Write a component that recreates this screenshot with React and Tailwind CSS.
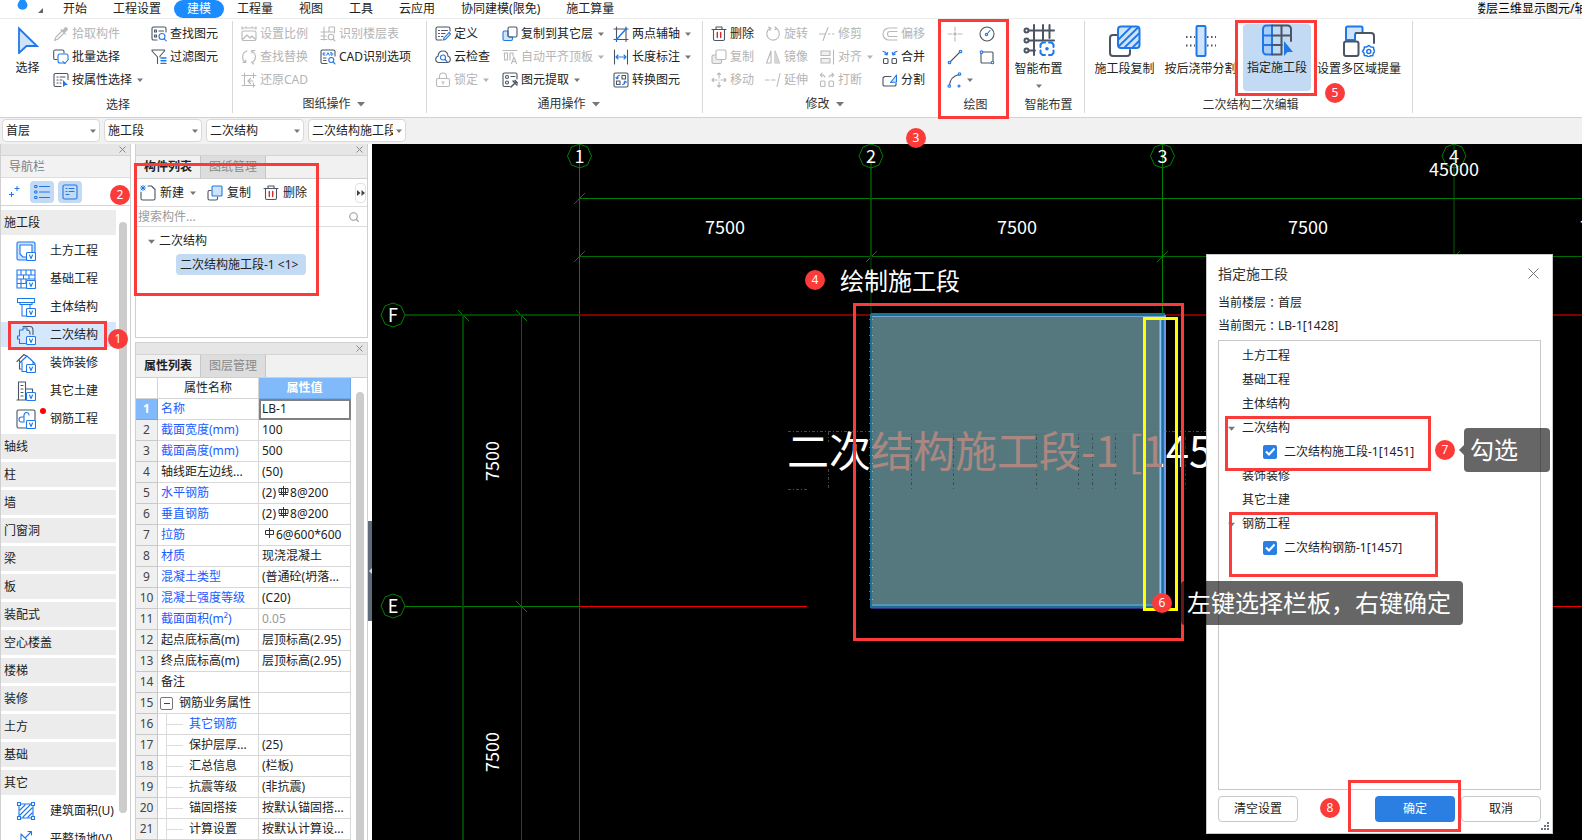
import React from "react";

const D = "#4b5563";
const B = "#1f78ea";
const G = "#b9b9b9";
const L = "#cfe3fb";

function Svg({ size = 16, box = 16, children, className = "" }) {
  return (
    <svg
      width={size}
      height={size}
      viewBox={`0 0 ${box} ${box}`}
      fill="none"
      strokeWidth="1.1"
      strokeLinecap="round"
      strokeLinejoin="round"
      className={`shrink-0 ${className}`}
      aria-hidden="true"
    >
      {children}
    </svg>
  );
}

function Caret({ color = "#777777", size = 7 }) {
  return (
    <svg width={size} height={size} viewBox="0 0 8 8" className="shrink-0" aria-hidden="true">
      <path d="M0 2h8L4 6.5z" fill={color} />
    </svg>
  );
}

const icons = {
  dropper: (
    <Svg>
      <path d="M9 5 3 11l-1.500 3.500L5 13l6-6" stroke={G} />
      <path d="M8 3.500 12.500 8M9.500 5l2.500-3c1-1 3 1 2 2l-3 2.500z" stroke={G} fill={G} />
    </Svg>
  ),
  batch: (
    <Svg>
      <path d="M4 10.500H2A1.500 1.500 0 0 1 .700 9V2.500A1.500 1.500 0 0 1 2 1h7.500A1.500 1.500 0 0 1 11 2.500V4" stroke={D} />
      <path d="M12 14H7a2 2 0 0 1-2-2V7a2 2 0 0 1 2-2h6a2 2 0 0 1 2 2v3" stroke={B} />
      <path d="m10 12.500 1.800 2 3.500-4" stroke={B} />
    </Svg>
  ),
  byAttr: (
    <Svg>
      <path d="M8 14.500H2.500a1.500 1.500 0 0 1-1.500-1.500V3a1.500 1.500 0 0 1 1.500-1.500h11A1.500 1.500 0 0 1 15 3v4.500M4 5h1M7 5h5M4 8h1M7 8h2M4 11h1M7 11h1" stroke={D} />
      <path d="m10 8 5 5h-2.500L10 15z" fill={B} />
    </Svg>
  ),
  find: (
    <Svg>
      <path d="M6 14H2.500A1.500 1.500 0 0 1 1 12.500v-10A1.500 1.500 0 0 1 2.500 1h11A1.500 1.500 0 0 1 15 2.500V6M3.500 4h2v2h-2zM3.500 9h2v2h-2zM8 5h4.500" stroke={D} />
      <circle cx="11" cy="10.500" r="3" stroke={B} />
      <path d="m13.200 12.800 2 2" stroke={B} />
    </Svg>
  ),
  filter: (
    <Svg>
      <path d="M6.500 14.500V8L1 2V1h12.500v1L9 7v1" stroke={D} />
      <path d="M10 9h5M10 11.700h5M10 14.400h5" stroke={B} strokeWidth="1.400" />
    </Svg>
  ),
  ratio: (
    <Svg>
      <path d="M1 2h14M1 .700v2.500M15 .700v2.500M5 .700V2M11 .700V2M2.500 5h11A1.500 1.500 0 0 1 15 6.500V13a1.500 1.500 0 0 1-1.500 1.500h-11A1.500 1.500 0 0 1 1 13V6.500A1.500 1.500 0 0 1 2.500 5zM2 13l4-4 3 3 2-2 3 3" stroke={G} />
    </Svg>
  ),
  replace: (
    <Svg>
      <path d="M6 2C.500 3.500.500 11 4.500 13.500M2 13.500h2.700V11M10 2c5.500 1.500 5.500 8 2 11M14 1.500h-3V4M10.500 13l2 2" stroke={G} />
    </Svg>
  ),
  restore: (
    <Svg>
      <path d="M3.500 1v12.500H14M1 3.500h14M12.500 1v5M1 13.500h2.500M12.500 11v4M7 9h5M9.500 6.500 7 9l2.500 2.500" stroke={G} />
    </Svg>
  ),
  floorTable: (
    <Svg>
      <path d="M4 1v5h5V1h5.500v6M1 6h3v8M1 13.500h6M1 10h5M9 6h5" stroke={G} />
      <circle cx="11" cy="11" r="2.800" stroke={G} />
      <path d="m13 13 2 2" stroke={G} />
    </Svg>
  ),
  cad: (
    <Svg>
      <path d="M7 14.500H2.500A1.500 1.500 0 0 1 1 13V2.500A1.500 1.500 0 0 1 2.500 1h11A1.500 1.500 0 0 1 15 2.500V7M3.500 9h2.500M3.500 11.500H6" stroke={D} />
      <path d="M5 4H3.200v2H5M6.700 6.200 8 3.700l1.300 2.500M11 3.800v2.400c2.600.300 2.600-2.700 0-2.400z" stroke={B} strokeWidth="1" />
      <circle cx="11.300" cy="11" r="2.500" stroke={B} />
      <path d="m13.200 13 1.800 1.800" stroke={B} />
    </Svg>
  ),
  define: (
    <Svg>
      <path d="M7 14H2.500A1.500 1.500 0 0 1 1 12.500v-10A1.500 1.500 0 0 1 2.500 1h11A1.500 1.500 0 0 1 15 2.500V5M3.500 4.500h1M6.500 4.500h6M3.500 7.500h1M6.500 7.500H10M3.500 10.500h1M6.500 10.500H8" stroke={D} />
      <path d="m9 12 5-5.500 1.500 1.500-5 5.500-2 .500z" stroke={B} fill={L} />
    </Svg>
  ),
  cloud: (
    <Svg>
      <path d="M4 13.500C1.500 13.500.700 11.800.700 10.300c0-1.500 1-2.700 2.300-3C3.200 4 5.300 2 8 2s4.800 2 5 5.300c1.400.300 2.300 1.500 2.300 3 0 1.500-.800 3.200-3.300 3.200z" stroke={D} />
      <circle cx="8" cy="8.500" r="2.500" stroke={B} />
      <path d="m10 10.500 2 2" stroke={B} />
    </Svg>
  ),
  lock: (
    <Svg>
      <path d="M3 6.500h10A1.500 1.500 0 0 1 14.500 8v5A1.500 1.500 0 0 1 13 14.500H3A1.500 1.500 0 0 1 1.500 13V8A1.500 1.500 0 0 1 3 6.500zM4.500 6.500V4.500a3.500 3.500 0 0 1 7 0v2M8 9.500v2.500M7 10h2" stroke={G} />
    </Svg>
  ),
  copyFloor: (
    <Svg>
      <path d="M6 5H2.500A1.500 1.500 0 0 0 1 6.500V13a1.500 1.500 0 0 0 1.500 1.500H9a1.500 1.500 0 0 0 1.500-1.500v-2H7.500A1.500 1.500 0 0 1 6 9.500z" stroke={B} fill={L} />
      <rect x="6" y="1" width="9" height="10" rx="1.500" stroke={D} />
    </Svg>
  ),
  flush: (
    <Svg>
      <path d="M1 1.500h14M2.500 4h3v7h-3zM8 11V4h3v3M9.500 14.500 12 8l2.500 6.500M10.500 12.500h3" stroke={G} />
    </Svg>
  ),
  extract: (
    <Svg>
      <path d="M8 14.500H2.500A1.500 1.500 0 0 1 1 13V2.500A1.500 1.500 0 0 1 2.500 1h11A1.500 1.500 0 0 1 15 2.500V7M9 4.500h4" stroke={D} />
      <circle cx="5" cy="5" r="1.500" stroke={D} />
      <circle cx="5" cy="10.500" r="1.500" stroke={D} />
      <path d="m9 15 5-5M11 9l4 4M13 8.500l2.500 2.500" stroke={D} strokeWidth="1.500" />
    </Svg>
  ),
  axis: (
    <Svg>
      <path d="M1 3h14M1 13.500h14M3.500 1v14.500M13 1v14.500" stroke={D} />
      <path d="M3.500 13.500 13 3" stroke={B} strokeWidth="1.500" />
      <circle cx="3.500" cy="13.500" r="1" fill={B} />
      <circle cx="13" cy="3" r="1" fill={B} />
    </Svg>
  ),
  dim: (
    <Svg>
      <path d="M1.500 1v14M14.500 1v14" stroke={D} />
      <path d="M3 8h10M5 6 3 8l2 2M11 6l2 2-2 2" stroke={B} />
    </Svg>
  ),
  convert: (
    <Svg>
      <rect x="1" y="1" width="14" height="14" rx="1.500" stroke={D} />
      <path d="M9 3.500h3.500V7H9zM3.500 9H7v3.500H3.500z" stroke={D} />
      <path d="M6.500 3.500c-2 0-2.500 1-2.500 3M3 5.500l1 1.300 1.300-1M9.500 12.500c2 0 2.500-1 2.500-3M11 10.500l1-1.300 1.300 1" stroke={B} />
    </Svg>
  ),
  trash: (
    <Svg>
      <path d="M1 3.500h14M5 3.500V1h6v2.500M2.500 3.500V13A1.500 1.500 0 0 0 4 14.500h8a1.500 1.500 0 0 0 1.500-1.500V3.500" stroke={D} />
      <path d="M6.300 6.500v5M9.700 6.500v5" stroke="#d22b2b" strokeWidth="1.400" />
    </Svg>
  ),
  rotate: (
    <Svg>
      <path d="M5 2.300A6.300 6.300 0 1 0 10.500 2M3.500 1 6 2.200 4.800 4.500M10 .800 12 2.500l-2 1.300" stroke={G} />
    </Svg>
  ),
  trim: (
    <Svg>
      <path d="M.500 8H6M4 14.500 9 1.500M9.500 8h1.500M13.500 8h1.500" stroke={G} />
    </Svg>
  ),
  offset: (
    <Svg>
      <path d="M15 2H7a6 6 0 0 0 0 12h8M15 5.500H8a2.500 2.500 0 0 0 0 5h7" stroke={G} />
    </Svg>
  ),
  copyGray: (
    <Svg>
      <path d="M5 6H2.500A1.500 1.500 0 0 0 1 7.500V13a1.500 1.500 0 0 0 1.500 1.500H9a1.500 1.500 0 0 0 1.500-1.500v-2.500" stroke={G} fill="#ececec" />
      <rect x="5" y="1" width="10" height="9.500" rx="1.500" stroke={G} fill="#ffffff" />
    </Svg>
  ),
  mirror: (
    <Svg>
      <path d="M6 2v12H1.500zM10 2v12h4.500z" stroke={G} />
      <path d="M10 2v12h4.500z" fill="#d5d5d5" />
    </Svg>
  ),
  align: (
    <Svg>
      <path d="M14.500 1v14M2 2h9v4.500H2zM2 9.500h9V14H2z" stroke={G} fill="#f0f0f0" />
    </Svg>
  ),
  merge: (
    <Svg>
      <rect x="1.500" y="9.500" width="4.500" height="5" rx="1" stroke={D} />
      <rect x="10" y="9.500" width="4.500" height="5" rx="1" stroke={D} />
      <path d="M1 2.500c2 0 3 .500 4 3M5.700 3.500 5 6 2.700 5M15 2.500c-2 0-3 .500-4 3M10.300 3.500 11 6l2.300-1" stroke={B} />
    </Svg>
  ),
  move: (
    <Svg>
      <path d="M8 1v5M8 10v5M1 8h5M10 8h5M6.500 2.500 8 1l1.500 1.500M6.500 13.500 8 15l1.500-1.500M2.500 6.500 1 8l1.500 1.500M13.500 6.500 15 8l-1.500 1.500M8 8h.010" stroke={G} />
    </Svg>
  ),
  extend: (
    <Svg>
      <path d="M.500 8h3.500M6.500 8H10M12 14.500l3-13" stroke={G} />
    </Svg>
  ),
  breakIt: (
    <Svg>
      <rect x="1.500" y="9" width="4.500" height="5.500" rx="1" stroke={G} />
      <rect x="10" y="9" width="4.500" height="5.500" rx="1" stroke={G} />
      <path d="M6 5C5 3 4 2.500 1.500 3M3 1 1.200 3 3 5M10 5c1-2 2-2.500 4.500-2M13 1l1.800 2L13 5" stroke={G} />
    </Svg>
  ),
  split: (
    <Svg>
      <path d="M9 4.500H2.500L1 6v7l1 1h11l1-1v-2" stroke={D} />
      <path d="m8.500 10.500 6-7.500v7z" stroke={B} fill={L} />
    </Svg>
  ),
  point: (
    <Svg>
      <path d="M8 1v4M8 11v4M1 8h4M11 8h4" stroke={G} />
      <circle cx="8" cy="8" r="1.700" fill={G} />
    </Svg>
  ),
  circle: (
    <Svg>
      <circle cx="8" cy="8" r="7" stroke={D} />
      <path d="m8 8 3-3.500" stroke={B} />
      <circle cx="7.500" cy="8.500" r="1.200" stroke={B} />
    </Svg>
  ),
  line: (
    <Svg>
      <path d="M3 13 13 3" stroke={D} />
      <circle cx="2.500" cy="13.500" r="1.300" stroke={B} />
      <circle cx="13.500" cy="2.500" r="1.300" stroke={B} />
    </Svg>
  ),
  rect: (
    <Svg>
      <rect x="2" y="3" width="12" height="11" rx="1" stroke={D} />
      <circle cx="2.500" cy="3.200" r="1.300" stroke={B} fill="#ffffff" />
      <circle cx="13.500" cy="13.500" r="1.300" stroke={B} fill="#ffffff" />
    </Svg>
  ),
  arc: (
    <Svg>
      <path d="M2.500 13C3 8 6 4 12 2.500" stroke={D} />
      <circle cx="2.300" cy="14" r="1.300" stroke={B} />
      <circle cx="12.500" cy="2" r="1.300" stroke={B} />
      <circle cx="12" cy="14" r="1" stroke={B} />
    </Svg>
  ),
  cursor: (
    <Svg size={28} box={28}>
      <path d="M5 2.500 23 20H12.500L5 27z" fill={L} stroke={B} strokeWidth="1.800" strokeLinejoin="miter" />
    </Svg>
  ),
  smart: (
    <Svg size={32} box={32}>
      <g stroke={D} strokeWidth="2">
        <path d="M6 6.500h25M6 16.500h25M6 26.500h6M11 1v30M20 1v15M26.500 1v13" />
        <circle cx="3.500" cy="6.500" r="2" />
        <circle cx="3.500" cy="16.500" r="2" />
        <circle cx="3.500" cy="26.500" r="2" />
      </g>
      <rect x="15" y="18" width="17" height="14" fill="#ffffff" />
      <path d="M17.500 23v-2.500l2-2H22M26 18.500h2.500l2 2V23M30.500 26.500V29l-2 2H26M22 31h-2.500l-2-2v-2.500" stroke={B} strokeWidth="2" />
      <circle cx="24" cy="24.700" r="1.800" fill={B} />
    </Svg>
  ),
  segCopy: (
    <Svg size={32} box={32}>
      <path d="M8 10H4a3 3 0 0 0-3 3v15a3 3 0 0 0 3 3h14a3 3 0 0 0 3-3v-3" stroke={D} strokeWidth="2" />
      <rect x="9" y="1.500" width="21.500" height="21.500" rx="3" fill={L} stroke={B} strokeWidth="2" />
      <path d="m10 14 12-12M10 21 29 2.500M16 22 30 8.500M24 22l6-6" stroke={B} strokeWidth="1.800" />
    </Svg>
  ),
  postCast: (
    <Svg size={32} box={32}>
      <rect x="11.500" y="1" width="9" height="30" rx="1" fill={L} stroke={B} strokeWidth="2" />
      <path d="M1 12h9M1 20.500h9M22 12h9M22 20.500h9" stroke={D} strokeWidth="2" strokeDasharray="1.500 2.500" strokeLinecap="butt" />
    </Svg>
  ),
  assign: (
    <Svg size={32} box={32}>
      <path d="M2 11.500V5a3.500 3.500 0 0 1 3.500-3.500H11v29H5.500A3.500 3.500 0 0 1 2 27z" fill="#a9cdf8" stroke={B} strokeWidth="2" />
      <path d="M2 11.500h9M2 21h9" stroke={B} strokeWidth="2" />
      <path d="M11 1.500h15.500A3.500 3.500 0 0 1 30 5v12M20.500 1.500v29M11 30.500h9.500M11 11.500h19M11 21h10" stroke={D} strokeWidth="2" />
      <path d="m23 17 9 11h-5.500L23 32z" fill={B} />
    </Svg>
  ),
  region: (
    <Svg size={32} box={32}>
      <path d="M3 15V3a1.500 1.500 0 0 1 1.500-1.500H18A1.500 1.500 0 0 1 19.500 3v5H14a2 2 0 0 0-2 2v5z" fill={L} stroke={B} strokeWidth="2" />
      <path d="M13 8h15a3 3 0 0 1 3 3v7" stroke={D} strokeWidth="2" />
      <rect x="1" y="16.500" width="14.500" height="14.500" rx="2" fill="#ffffff" stroke={D} strokeWidth="2" />
      <path d="m26 20.500 2 1.500 2.500.200.300 2.500 1 1.800-1.500 1.800-.500 2.400-2.300.100L25.500 32l-1.800-1.300-2.400-.200-.300-2.400-1.500-1.800 1.500-2 .400-2.200 2.300-.200z" stroke={B} strokeWidth="1.500" />
      <circle cx="25.800" cy="26.500" r="2" stroke={B} strokeWidth="1.500" />
    </Svg>
  ),
  newItem: (
    <Svg>
      <path d="M8 1h3.500L15 4.500v9a1.500 1.500 0 0 1-1.500 1.500h-11A1.500 1.500 0 0 1 1 13.500V7" stroke={D} />
      <path d="m1 1 4 4M5 1 1 5M3 .500v5M.500 3h5" stroke={B} strokeWidth="1" />
    </Svg>
  ),
  copyBlue: (
    <Svg>
      <path d="M4 5.500H2.500A1.500 1.500 0 0 0 1 7v6.500A1.500 1.500 0 0 0 2.500 15H9a1.500 1.500 0 0 0 1.500-1.500V12" stroke={D} />
      <rect x="5" y="1" width="10" height="10" rx="1" stroke={B} fill={L} />
    </Svg>
  ),
};

const V = (
  <>
    <rect x="10.500" y="11.500" width="9" height="8" rx="1" fill="#ffffff" stroke={B} />
    <path d="m13.500 14 1.500 3.500 1.500-3.500" stroke={B} strokeWidth="1.100" />
  </>
);

const navIcons = {
  earth: (
    <Svg size={20} box={20}>
      <rect x="1" y="1" width="18" height="18" rx="1.500" fill={L} stroke={B} />
      <path d="M4 4h12v12H7l-3-3z" fill="#ffffff" stroke={B} />
      {V}
    </Svg>
  ),
  base: (
    <Svg size={20} box={20}>
      <path d="M1 1h18v18H1zM1 6h18M1 10h18M1 14.500h18M5 1v5M10 1v5M15 1v5M7.500 6v4M13 6v4M5 10v4.500M10 10v4.500M5 14.500V19" stroke={B} />
      {V}
    </Svg>
  ),
  main: (
    <Svg size={20} box={20}>
      <path d="M1.500 1.500h17v4h-17zM4 5.500v2h12v-2M6 7.500V19h5M14 7.500v4" stroke={B} />
      {V}
    </Svg>
  ),
  second: (
    <Svg size={20} box={20}>
      <path d="M9.500 18.500H3.500V14H1.500v-3h2V5h3.500V3h4v2M3.500 9V7" stroke={B} />
      <path d="M7 1.500h7c2.500 0 3 2 3 4v4M11 5c2.500 0 3 1 3 4" stroke={D} />
      {V}
    </Svg>
  ),
  decor: (
    <Svg size={20} box={20}>
      <path d="M1 8.500 8 1.500l3 2M3.500 7.500V16H5" stroke={D} />
      <path d="m3.500 10 7.500-7 8 7.500M6 9v9.500h4M17 9v2" stroke={B} />
      {V}
    </Svg>
  ),
  other: (
    <Svg size={20} box={20}>
      <path d="M2.500 19V1h7v18M1 19h9M9.500 8h7v3M5 4.500h2M5 8h2M5 11.500h2M5 15h2" stroke={D} />
      {V}
    </Svg>
  ),
  rebar: (
    <Svg size={20} box={20}>
      <path d="M10 19H2.500A1.500 1.500 0 0 1 1 17.500v-15A1.500 1.500 0 0 1 2.500 1h15A1.500 1.500 0 0 1 19 2.500V11" stroke={D} />
      <path d="M8 8H5.500a2.500 2.500 0 0 0 0 5H8V6.500c0-4 5-4 5-.500" stroke={B} />
      {V}
    </Svg>
  ),
  area: (
    <Svg size={20} box={20}>
      <path d="M3 3h14v14H3zM4 9l5-5M4 14 14 4M7 16 16 7M12 16l4-4" stroke={B} />
      <g fill="#ffffff" stroke={B}>
        <path d="M1.500 1.500h3v3h-3zM15.500 1.500h3v3h-3zM1.500 15.500h3v3h-3zM15.500 15.500h3v3h-3z" />
      </g>
    </Svg>
  ),
  ground: (
    <Svg size={20} box={20}>
      <path d="M9 9 15 3M12 2.500 15.500 2.500V6M5 5l8 8M5 5v7h7M2 16h16" stroke={B} />
    </Svg>
  ),
};

function Badge({ n, className }) {
  return (
    <span
      className={`absolute z-20 flex h-5 w-5 items-center justify-center rounded-full bg-[#fb3a3a] text-xs leading-none text-white ${className}`}
    >
      {n}
    </span>
  );
}

function Frame({ className }) {
  return <span aria-hidden="true" className={`pointer-events-none absolute z-10 border-3 border-[#fb3a3a] ${className}`} />;
}

function Tool({ icon, label, off, arrow, name }) {
  return (
    <button
      type="button"
      disabled={off}
      aria-label={name}
      className={`flex h-[23px] items-center gap-[3px] whitespace-nowrap text-xs ${off ? "text-[#b4b4b4]" : "text-[#222222]"}`}
    >
      {icons[icon]}
      {label && <span>{label}</span>}
      {arrow && (
        <span className="ml-0.5 flex">
          <Caret color={off ? "#b4b4b4" : "#777777"} size={6} />
        </span>
      )}
    </button>
  );
}

function Col({ className = "", children }) {
  return <div className={`flex flex-col items-start ${className}`}>{children}</div>;
}

function Group({ label, arrow, className = "", children }) {
  return (
    <section className={`relative flex shrink-0 flex-col pt-[3px] ${className}`} aria-label={label}>
      <div className="flex h-[69px]">{children}</div>
      <div className={`flex h-[26px] items-center justify-center gap-1.5 text-xs text-[#333333] ${arrow ? "" : "pt-0.5 pl-1"}`}>
        <span>{label}</span>
        {arrow && <Caret size={8} />}
      </div>
    </section>
  );
}

function Divider() {
  return <div className="mt-0.5 mb-1 w-px shrink-0 bg-[#d8d8d8]" />;
}

function BigTool({ icon, label, active, className = "" }) {
  return (
    <button
      type="button"
      className={`flex h-[67px] shrink-0 flex-col items-center gap-[3px] overflow-hidden rounded-sm text-xs whitespace-nowrap text-[#222222] ${
        active ? "mt-0.5 bg-[#c2daf3]" : "pt-[3px]"
      } ${className}`}
    >
      {icons[icon]}
      <span className="leading-[18px]">{label}</span>
    </button>
  );
}

const tabs = ["开始", "工程设置", "建模", "工程量", "视图", "工具", "云应用", "协同建模(限免)", "施工算量"];

function TopTabs() {
  return (
    <nav className="flex h-[19px] items-stretch border-b border-[#ebebeb] bg-white" aria-label="菜单">
      <div className="flex w-[50px] shrink-0 justify-between pr-[7px] pl-[17px]">
        <svg width="11" height="10" viewBox="0 0 11 10" aria-hidden="true">
          <path d="M3 0h5c2 3 3 4.500 2 7-1.500 3.500-7.500 3.500-9 0C0 4.500 1 3 3 0z" fill="#1f8fff" />
        </svg>
        <svg width="5" height="13" viewBox="0 0 5 13" aria-hidden="true">
          <path d="M5 8v5H0z" fill="#666666" />
        </svg>
      </div>
      {tabs.map((t) => (
        <a
          key={t}
          href="#"
          className={`flex items-center px-[13px] text-xs whitespace-nowrap ${
            t === "建模" ? "rounded-full bg-[#1a8cff] text-white" : "text-[#222222]"
          }`}
        >
          {t}
        </a>
      ))}
      <div className="ml-auto flex w-[104px] overflow-hidden rounded-sm bg-[#f6f6f6]">
        <span className="-ml-1 text-xs leading-[18px] whitespace-nowrap text-black">楼层三维显示图元/轴网</span>
      </div>
    </nav>
  );
}

function Ribbon() {
  return (
    <header className="flex h-[99px] border-b border-[#d2d2d2] bg-white">
      <Group label="选择" className="w-[232px]">
        <button type="button" className="flex w-[53px] flex-col items-center gap-[3px] pt-1 pl-0.5 text-xs text-[#222222]">
          {icons.cursor}
          <span className="leading-[22px]">选择</span>
        </button>
        <Col className="w-[98px]">
          <Tool icon="dropper" label="拾取构件" off />
          <Tool icon="batch" label="批量选择" />
          <Tool icon="byAttr" label="按属性选择" arrow />
        </Col>
        <Col>
          <Tool icon="find" label="查找图元" />
          <Tool icon="filter" label="过滤图元" />
        </Col>
      </Group>
      <Divider />
      <Group label="图纸操作" arrow className="w-[193px] pl-2">
        <Col className="w-[79px]">
          <Tool icon="ratio" label="设置比例" off />
          <Tool icon="replace" label="查找替换" off />
          <Tool icon="restore" label="还原CAD" off />
        </Col>
        <Col>
          <Tool icon="floorTable" label="识别楼层表" off />
          <Tool icon="cad" label="CAD识别选项" />
        </Col>
      </Group>
      <Divider />
      <Group label="通用操作" arrow className="w-[275px] pl-2">
        <Col className="w-[67px]">
          <Tool icon="define" label="定义" />
          <Tool icon="cloud" label="云检查" />
          <Tool icon="lock" label="锁定" off arrow />
        </Col>
        <Col className="w-[111px]">
          <Tool icon="copyFloor" label="复制到其它层" arrow />
          <Tool icon="flush" label="自动平齐顶板" off arrow />
          <Tool icon="extract" label="图元提取" arrow />
        </Col>
        <Col>
          <Tool icon="axis" label="两点辅轴" arrow />
          <Tool icon="dim" label="长度标注" arrow />
          <Tool icon="convert" label="转换图元" />
        </Col>
      </Group>
      <Divider />
      <Group label="修改" arrow className="w-[235px] pl-2">
        <Col className="w-[54px]">
          <Tool icon="trash" label="删除" />
          <Tool icon="copyGray" label="复制" off />
          <Tool icon="move" label="移动" off />
        </Col>
        <Col className="w-[54px]">
          <Tool icon="rotate" label="旋转" off />
          <Tool icon="mirror" label="镜像" off />
          <Tool icon="extend" label="延伸" off />
        </Col>
        <Col className="w-[63px]">
          <Tool icon="trim" label="修剪" off />
          <Tool icon="align" label="对齐" off arrow />
          <Tool icon="breakIt" label="打断" off />
        </Col>
        <Col>
          <Tool icon="offset" label="偏移" off />
          <Tool icon="merge" label="合并" />
          <Tool icon="split" label="分割" />
        </Col>
      </Group>
      <Group label="绘图" className="w-[71px]">
        <Frame className="inset-x-0 top-0 -bottom-0.5" />
        <Col className="w-8 pl-[9px]">
          <Tool icon="point" name="点" off />
          <Tool icon="line" name="直线" />
          <button type="button" className="flex h-[23px] items-center gap-1" aria-label="弧">
            {icons.arc}
            <Caret size={6} />
          </button>
        </Col>
        <Col className="pl-[9px]">
          <Tool icon="circle" name="圆" />
          <Tool icon="rect" name="矩形" />
        </Col>
      </Group>
      <Group label="智能布置" className="w-[75px]">
        <button type="button" className="flex w-full flex-col items-center pt-0.5 pr-4 text-xs text-[#222222]">
          {icons.smart}
          <span className="mt-1 mb-[5px] leading-[18px]">智能布置</span>
          <Caret size={6} />
        </button>
      </Group>
      <Divider />
      <Group label="二次结构二次编辑" className="w-[327px]">
        <BigTool icon="segCopy" label="施工段复制" className="ml-1 w-[71px]" />
        <BigTool icon="postCast" label="按后浇带分割" className="w-[81px]" />
        <BigTool icon="assign" label="指定施工段" active className="ml-[2px] w-[68px]" />
        <BigTool icon="region" label="设置多区域提量" className="ml-[5px] w-[86px]" />
        <Frame className="top-px left-[150px] h-[76px] w-[82px]" />
        <Badge n="5" className="top-16 left-[240px]" />
      </Group>
      <Divider />
    </header>
  );
}

function Selectors() {
  return (
    <div className="relative flex h-[26px] items-start gap-1 bg-[#f1f1f1] pt-px pl-0.5">
      {[
        ["楼层", "首层"],
        ["专业", "施工段"],
        ["类型", "二次结构"],
        ["构件", "二次结构施工段"],
      ].map(([name, value]) => (
        <label key={name} className="relative flex h-[23px] w-[98px]">
          <select
            aria-label={name}
            className="h-full w-full appearance-none overflow-hidden rounded border border-[#d9d9d9] bg-white pr-3 pl-[3px] text-xs text-[#222222]"
          >
            <option>{value}</option>
          </select>
          <span className="pointer-events-none absolute inset-y-0 right-1 flex items-center">
            <Caret size={6} />
          </span>
        </label>
      ))}
      <Badge n="3" className="top-[10px] left-[906px]" />
    </div>
  );
}

function Strip() {
  return (
    <div className="flex h-3 shrink-0 items-center justify-end border-b border-[#d4d4d4] bg-[#e6e6e6] pr-1">
      <button type="button" aria-label="关闭" className="flex">
        <svg width="7" height="7" viewBox="0 0 7 7" stroke="#8a8a8a" aria-hidden="true">
          <path d="m.500.500 6 6M6.500.500l-6 6" />
        </svg>
      </button>
    </div>
  );
}

const navTop = [
  ["earth", "土方工程"],
  ["base", "基础工程"],
  ["main", "主体结构"],
  ["second", "二次结构"],
  ["decor", "装饰装修"],
  ["other", "其它土建"],
  ["rebar", "钢筋工程"],
];
const navHeads = ["轴线", "柱", "墙", "门窗洞", "梁", "板", "装配式", "空心楼盖", "楼梯", "装修", "土方", "基础", "其它"];

function NavHead({ children }) {
  return (
    <button type="button" className="mb-[3px] block h-[25px] w-full bg-[#ececec] pl-[3px] text-left text-xs leading-[25px] text-[#222222]">
      {children}
    </button>
  );
}

function NavItem({ icon, label }) {
  const active = label === "二次结构";
  return (
    <div className="relative mb-[3px]">
      <a
        href="#"
        className={`flex h-[25px] items-center gap-3.5 pl-[15px] text-xs whitespace-nowrap text-[#222222] ${active ? "bg-[#d4e7fd]" : ""}`}
      >
        {navIcons[icon]}
        {label}
      </a>
      {icon === "rebar" && <span className="absolute top-0.5 left-[39px] h-1.5 w-1.5 rounded-full bg-[#ff0000]" />}
      {active && (
        <>
          <Frame className="-top-px left-[7px] h-[29px] w-[99px]" />
          <Badge n="1" className="top-[7px] left-[107px]" />
        </>
      )}
    </div>
  );
}

function NavPanel() {
  return (
    <aside className="relative flex w-[131px] shrink-0 flex-col border-x border-[#d0d0d0] bg-white">
      <Strip />
      <h2 className="h-[22px] shrink-0 border-b border-[#dedede] bg-[#f2f2f2] pl-2 text-xs leading-[21px] text-[#808080]">导航栏</h2>
      <div className="flex h-7 shrink-0 items-center gap-1 border-b border-[#d4d4d4] pl-2">
        <button type="button" aria-label="展开" className="mr-1.5 flex w-[11px]">
          <svg width="11" height="12" viewBox="0 0 11 12" stroke={B} aria-hidden="true">
            <path d="M8 0v5M5.500 2.500h5M2.500 6v5M0 8.500h5" />
          </svg>
        </button>
        <button type="button" aria-label="列表" className="flex h-[22px] w-6 items-center justify-center rounded-sm bg-[#c2daf3]">
          <Svg>
            <path d="M5.500 2.500h10M5.500 8h10M5.500 13.500h10" stroke={B} />
            <path d="M1 1.500h2v2H1zM1 7h2v2H1zM1 12.500h2v2H1z" stroke={B} strokeWidth="1" />
          </Svg>
        </button>
        <button type="button" aria-label="详情" className="flex h-[22px] w-6 items-center justify-center rounded-sm bg-[#c2daf3]">
          <Svg>
            <rect x="1" y="1" width="14" height="14" rx="1.500" stroke={B} />
            <path d="M4 4.500h1M7 4.500h5M4 7.500h1M7 7.500h5M4 10.500h3" stroke={B} />
          </Svg>
        </button>
      </div>
      <Badge n="2" className="top-[41px] left-[109px]" />
      <div className="flex min-h-0 flex-1 gap-[3px] overflow-hidden">
        <div className="w-[115px] shrink-0 pt-1">
          <NavHead>施工段</NavHead>
          {navTop.map(([icon, label]) => (
            <NavItem key={label} icon={icon} label={label} />
          ))}
          {navHeads.map((h) => (
            <NavHead key={h}>{h}</NavHead>
          ))}
          <NavItem icon="area" label="建筑面积(U)" />
          <NavItem icon="ground" label="平整场地(V)" />
        </div>
        <div className="mt-4 mb-[27px] w-2 rounded-full bg-[#cccccc]" />
      </div>
    </aside>
  );
}

function PanelTabs({ a, b }) {
  return (
    <div role="tablist" className="flex h-[23px] shrink-0 border-b border-[#d0d0d0] bg-[#f1f1f1] text-xs">
      <button type="button" role="tab" aria-selected="true" className="w-[65px] border-r border-[#c4c8cc] font-bold text-[#222222]">
        {a}
      </button>
      <button type="button" role="tab" aria-selected="false" className="w-[65px] border-r border-[#c4c8cc] bg-[#dddddd] text-[#8a8a8a]">
        {b}
      </button>
    </div>
  );
}

function ComponentPanel() {
  return (
    <section className="relative flex h-[194px] shrink-0 flex-col border-x border-b border-[#d0d0d0] bg-white" aria-label="构件列表">
      <Strip />
      <PanelTabs a="构件列表" b="图纸管理" />
      <div className="flex h-7 shrink-0 items-center border-b border-[#dddddd] pt-px pl-1 text-xs text-[#222222]">
        <button type="button" className="flex w-[67px] items-center gap-1">
          {icons.newItem}新建
          <span className="ml-0.5 flex">
            <Caret size={6} />
          </span>
        </button>
        <button type="button" className="flex w-14 items-center gap-1">
          {icons.copyBlue}复制
        </button>
        <button type="button" className="flex items-center gap-1">
          {icons.trash}删除
        </button>
        <button type="button" aria-label="更多" className="mr-px ml-auto flex h-5 w-[11px] items-center justify-center rounded-sm border border-[#e2e2e2]">
          <svg width="8" height="6" viewBox="0 0 8 6" className="shrink-0" aria-hidden="true">
            <path d="m0 0 3.500 3L0 6zM4.500 0 8 3 4.500 6z" fill="#444444" />
          </svg>
        </button>
      </div>
      <label className="flex h-5 shrink-0 items-center border-b border-[#dddddd] pr-2 pl-0.5">
        <input
          type="text"
          aria-label="搜索构件"
          placeholder="搜索构件..."
          className="h-[18px] min-w-0 flex-1 bg-transparent text-xs outline-none placeholder:text-[#9a9a9a]"
        />
        <Svg size={10} box={10}>
          <circle cx="4.500" cy="4.500" r="3.800" stroke="#999999" strokeWidth="1.100" />
          <path d="m7.300 7.300 2 2" stroke="#999999" strokeWidth="1.200" />
        </Svg>
      </label>
      <div className="flex flex-col items-start pt-0.5 pl-3 text-xs text-[#222222]">
        <button type="button" className="flex h-6 items-center gap-1">
          <Caret />
          二次结构
        </button>
        <button type="button" className="mt-px ml-7 h-[21px] rounded-sm bg-[#c2daf3] pr-2 pl-1 leading-[21px] whitespace-nowrap">
          二次结构施工段-1 &lt;1&gt;
        </button>
      </div>
      <Frame className="top-[19px] -left-0.5 h-[133px] w-[185px]" />
    </section>
  );
}

function RebarMark({ grade }) {
  return (
    <svg width="11" height="12" viewBox="0 0 11 12" stroke="#333333" fill="none" className="mr-px mb-0.5 ml-0.5 shrink-0" role="img" aria-label="钢筋">
      {grade === 3 ? <path d="M1 2.500h9v4H1zM5.500 0v11M3.500 2.500v6M7.500 2.500v6M1 8.500h9" /> : <path d="M1.500 2.500h8v4h-8zM5.500 0v10" />}
    </svg>
  );
}

function BarValue({ before, grade, after }) {
  return (
    <span className="flex h-5 items-center">
      {before}
      <RebarMark grade={grade} />
      {after}
    </span>
  );
}

const props = [
  ["名称", "LB-1", 1],
  ["截面宽度(mm)", "100", 1],
  ["截面高度(mm)", "500", 1],
  ["轴线距左边线...", "(50)", 0],
  ["水平钢筋", <BarValue before="(2)" grade={3} after="8@200" />, 1],
  ["垂直钢筋", <BarValue before="(2)" grade={3} after="8@200" />, 1],
  ["拉筋", <BarValue before="" grade={1} after="6@600*600" />, 1],
  ["材质", "现浇混凝土", 1],
  ["混凝土类型", "(普通砼(坍落...", 1],
  ["混凝土强度等级", "(C20)", 1],
  ["截面面积(m²)", "0.05", 1],
  ["起点底标高(m)", "层顶标高(2.95)", 0],
  ["终点底标高(m)", "层顶标高(2.95)", 0],
  ["备注", "", 0],
  ["钢筋业务属性", "", 0],
  ["其它钢筋", "", 1],
  ["保护层厚...", "(25)", 0],
  ["汇总信息", "(栏板)", 0],
  ["抗震等级", "(非抗震)", 0],
  ["锚固搭接", "按默认锚固搭...", 0],
  ["计算设置", "按默认计算设...", 0],
];

function NameCell({ i, label }) {
  if (i === 14)
    return (
      <span className="flex items-center gap-1.5">
        <button
          type="button"
          aria-label="折叠"
          className="-ml-px flex h-[13px] w-[13px] items-center justify-center rounded-xs border border-[#777777] bg-white"
        >
          <span className="h-px w-1.5 bg-[#444444]" />
        </button>
        {label}
      </span>
    );
  if (i > 14)
    return (
      <span className="ml-[5px] flex h-5 items-center gap-1.5 border-l border-[#dcdcdc]">
        <span className="h-px w-4 bg-[#dcdcdc]" />
        {label}
      </span>
    );
  return label;
}

function PropertyPanel() {
  return (
    <section className="flex min-h-0 flex-1 flex-col overflow-hidden border-x border-t border-[#d0d0d0] bg-white" aria-label="属性列表">
      <Strip />
      <PanelTabs a="属性列表" b="图层管理" />
      <div className="flex min-h-0 flex-1 gap-[5px] overflow-hidden">
        <table className="w-[215px] shrink-0 table-fixed border-separate border-spacing-0 self-start text-xs text-[#222222]">
          <colgroup>
            <col className="w-[22px]" />
            <col className="w-[101px]" />
            <col className="w-[92px]" />
          </colgroup>
          <thead>
            <tr className="h-[21px]">
              <th className="border-r border-b border-[#d4d4d4] p-0" />
              <th className="border-r border-b border-[#d4d4d4] p-0 leading-5 font-normal">属性名称</th>
              <th className="border-r border-b border-[#6fa8e8] bg-[#80bafb] p-0 leading-5 font-bold text-white">属性值</th>
            </tr>
          </thead>
          <tbody>
            {props.map(([name, value, blue], i) => (
              <tr key={i} className="h-[21px]">
                <th
                  className={`border-r border-b p-0 text-center leading-5 ${
                    i === 0 ? "border-[#6fa8e8] bg-[#80bafb] font-bold text-white" : "border-[#c9c9c9] bg-[#f0f0f0] font-normal text-[#444444]"
                  }`}
                >
                  {i + 1}
                </th>
                <td
                  className={`overflow-hidden border-r border-b border-[#d8d8d8] p-0 pl-[3px] leading-5 whitespace-nowrap ${blue ? "text-[#1a5cff]" : ""}`}
                >
                  <NameCell i={i} label={name} />
                </td>
                <td
                  className={`overflow-hidden border-r border-b border-[#d8d8d8] p-0 pl-[3px] leading-5 whitespace-nowrap ${
                    i === 0 ? "outline-2 -outline-offset-2 outline-[#808080]" : ""
                  } ${i === 10 ? "text-[#999999]" : ""}`}
                >
                  {value}
                </td>
              </tr>
            ))}
          </tbody>
        </table>
        <div className="mt-3.5 -mb-2 w-2 rounded-full bg-[#cccccc]" />
      </div>
    </section>
  );
}

function AxisMark({ x, y, label }) {
  return (
    <g>
      <path
        d="M0-12 8-9 12 0 8 9 0 12-8 9-12 0-8-9z"
        transform={`translate(${x} ${y})`}
        stroke="#008000"
        fill="none"
      />
      <text x={x} y={y + 7} textAnchor="middle" fontSize="18" fill="#ffffff">
        {label}
      </text>
    </g>
  );
}

function Drawing() {
  return (
    <svg
      className="absolute inset-0 h-full w-full font-['Noto_Sans_CJK_SC',sans-serif]"
      fill="none"
      role="img"
      aria-label="轴网与施工段"
    >
      <defs>
        <linearGradient id="labelInk" gradientUnits="userSpaceOnUse" x1="499" y1="0" x2="790" y2="0">
          <stop offset="0" stopColor="#ffffff" />
          <stop offset="0" stopColor="#aa8780" />
          <stop offset="1" stopColor="#aa8780" />
          <stop offset="1" stopColor="#ffffff" />
        </linearGradient>
      </defs>
      <g stroke="#008000">
        <path d="M207.500 0v171M790.500 0v171" />
        <path d="M207 54.500H3000" />
        <path d="M207 112.500H3000" stroke="#006a00" />
        <path d="M1082 0v112" stroke="#006000" />
        <path d="M33 462.500h174" />
        <path d="M202 60l11-11M202 118l11-11M494 118l11-11M785 118l11-11M1077 118l11-11M86 166l11 11M144 166l11 11M144 457l11 11" />
      </g>
      <path d="M499 12v100M33 171h174M91 171v3000" stroke="#004600" strokeWidth="2" />
      <path d="M499 112v60" stroke="#002800" strokeWidth="2" />
      <path d="M149.500 171v3000" stroke="#006000" />
      <path d="M207 171H3000" stroke="#800000" strokeWidth="2" />
      <path d="M207.500 171v3000M207 462.500h228M1181 462.500h1800" stroke="#f00000" />
      <AxisMark x={207.5} y={12} label="1" />
      <AxisMark x={499} y={12} label="2" />
      <AxisMark x={790.5} y={12} label="3" />
      <AxisMark x={1082} y={12} label="4" />
      <AxisMark x={21} y={171} label="F" />
      <AxisMark x={21} y={462} label="E" />
      <g fontSize="18" fill="#ffffff" textAnchor="middle">
        <text x="353" y="90">7500</text>
        <text x="645" y="90">7500</text>
        <text x="936" y="90">7500</text>
        <text x="1228" y="90">7500</text>
        <text x="1082" y="32">45000</text>
        <text transform="translate(127 317) rotate(-90)">7500</text>
        <text transform="translate(127 608) rotate(-90)">7500</text>
      </g>
      <rect x="499" y="170" width="293" height="293" fill="#55787e" />
      <path d="M499 169.500h294" stroke="#5a4fae" />
      <path d="M499 171h294" stroke="#1c7192" strokeWidth="2" />
      <path d="M500 172.500h292" stroke="#74a3cf" />
      <path d="M500 461h292" stroke="#5f8fbb" strokeWidth="2" />
      <path d="M499 463h294" stroke="#1c7192" strokeWidth="2" />
      <path d="M499 464.500h294" stroke="#33307a" />
      <path d="M499 170v294" stroke="#1c7192" strokeWidth="2" />
      <path d="M500.500 175v286" stroke="#9db7d8" strokeDasharray="1 7" />
      <path d="M497.500 175v286" stroke="#55779e" strokeDasharray="1 7" />
      <path d="M788.500 173v288" stroke="#8fc4ff" strokeWidth="2" />
      <path d="M790.500 173v290" stroke="#1c7192" strokeWidth="2" />
      <path d="M793 171v293" stroke="#6c97ef" strokeWidth="2" />
      <path d="M416 287.500h420M456.500 288v10M456.500 325v20M416 345.500h20" stroke="#777777" strokeDasharray="3 2 1 2" opacity=".6" />
      <path d="M539.500 290v55M581.500 290v55M664.500 290v55M706.500 290v55M720.500 290v55M743.500 290v55M813.500 290v55" stroke="#2c3d40" strokeDasharray="1 2 3 3" opacity=".7" />
      <text x="415" y="323" fontSize="42" fill="url(#labelInk)">
        二次结构施工段-1 [1451]
      </text>
    </svg>
  );
}

const treeRows = [
  ["土方工程"],
  ["基础工程"],
  ["主体结构"],
  ["二次结构", "二次结构施工段-1[1451]"],
  ["装饰装修"],
  ["其它土建"],
  ["钢筋工程", "二次结构钢筋-1[1457]"],
];

function CheckRow({ label }) {
  return (
    <label className="flex h-6 items-center gap-[7px] pl-11">
      <span className="relative flex h-3.5 w-3.5">
        <input type="checkbox" defaultChecked className="h-3.5 w-3.5 appearance-none rounded-xs bg-[#2b7fe3]" />
        <svg viewBox="0 0 14 14" className="pointer-events-none absolute inset-0" fill="none" stroke="#ffffff" strokeWidth="2" aria-hidden="true">
          <path d="m3 6.500 3 3 5.500-6" />
        </svg>
      </span>
      {label}
    </label>
  );
}

function Field({ name, value }) {
  return (
    <p className="flex h-[23px] shrink-0 items-center">
      <span>{name}</span>
      <span className="font-['Noto_Sans_CJK_TC',sans-serif]" lang="zh-TW">
        ：
      </span>
      <span>{value}</span>
    </p>
  );
}

function Dialog() {
  return (
    <div
      role="dialog"
      aria-label="指定施工段"
      className="absolute top-[110px] right-[29px] bottom-1.5 flex w-[347px] flex-col border border-[#c8c8c8] bg-white px-[11px] text-xs text-[#222222]"
    >
      <div className="flex h-9 shrink-0 items-center justify-between pt-px pr-0.5">
        <h2 className="text-sm text-[#333333]">指定施工段</h2>
        <button type="button" aria-label="关闭" className="flex">
          <svg width="11" height="11" viewBox="0 0 11 11" stroke="#777777" aria-hidden="true">
            <path d="m.500.500 10 10M10.500.500l-10 10" />
          </svg>
        </button>
      </div>
      <Field name="当前楼层" value="首层" />
      <Field name="当前图元" value="LB-1[1428]" />
      <div className="relative mt-[3px] min-h-0 flex-1 border border-[#c8c8c8] pt-[3px]">
        {treeRows.map(([head, child]) => (
          <React.Fragment key={head}>
            <div className="flex h-6 items-center">
              <span className="flex w-[23px] justify-center pl-0.5">{child && <Caret />}</span>
              {head}
            </div>
            {child && <CheckRow label={child} />}
          </React.Fragment>
        ))}
        <Frame className="top-[75px] left-1.5 h-[55px] w-[206px]" />
        <Frame className="top-[171px] left-2.5 h-[65px] w-[209px]" />
        <Badge n="7" className="top-[99px] left-[216px]" />
        <div className="absolute top-[87px] left-[245px] z-20 h-11 w-[86px] rounded-sm bg-black/60 pl-1.5 text-2xl leading-[44px] text-white">
          <span className="absolute top-[17px] -left-[5px] border-y-[5px] border-r-[5px] border-y-transparent border-r-black/60" />
          勾选
        </div>
      </div>
      <div className="relative mt-1.5 mb-[11px] flex h-[26px] shrink-0 items-stretch gap-1.5">
        <button type="button" className="w-20 rounded border border-[#c8c8c8] bg-white">
          清空设置
        </button>
        <button type="button" className="ml-auto w-20 rounded bg-[#2b7fe3] text-white">
          确定
        </button>
        <button type="button" className="w-20 rounded border border-[#c8c8c8] bg-white">
          取消
        </button>
        <Badge n="8" className="top-0.5 left-[102px]" />
        <Frame className="-top-4 left-[130px] h-[52px] w-[113px]" />
      </div>
      <svg width="8" height="8" viewBox="0 0 8 8" fill="#6b7280" className="absolute right-[3px] bottom-[3px]" aria-hidden="true">
        <path d="M6 0h2v2H6zM6 3h2v2H6zM3 3h2v2H3zM6 6h2v2H6zM3 6h2v2H3zM0 6h2v2H0z" />
      </svg>
    </div>
  );
}

function Canvas() {
  return (
    <main className="relative min-w-0 flex-1 overflow-hidden bg-black">
      <Drawing />
      <Frame className="top-[159px] left-[481px] h-[338px] w-[331px]" />
      <span aria-hidden="true" className="absolute top-[173px] left-[771px] h-[294px] w-[35px] border-3 border-[#ffff00]" />
      <Badge n="4" className="top-[126px] left-[433px]" />
      <p className="absolute top-[119px] left-[468px] text-2xl leading-9 whitespace-nowrap text-white">绘制施工段</p>
      <Dialog />
      <Badge n="6" className="top-[449px] left-[780px]" />
      <p className="absolute top-[437px] left-[809px] z-20 h-11 rounded-sm bg-black/60 pr-3 pl-1.5 text-2xl leading-[44px] whitespace-nowrap text-white">
        左键选择栏板，右键确定
      </p>
    </main>
  );
}

export default function App() {
  return (
    <div className="flex h-screen flex-col overflow-hidden bg-white font-['Noto_Sans','Noto_Sans_CJK_SC',sans-serif]">
      <TopTabs />
      <Ribbon />
      <Selectors />
      <div className="flex min-h-0 flex-1">
        <NavPanel />
        <div className="ml-1 flex w-[233px] shrink-0 flex-col gap-1">
          <ComponentPanel />
          <PropertyPanel />
        </div>
        <div className="flex w-1 shrink-0 flex-col pt-[377px]">
          <button type="button" aria-label="收起" className="flex h-[100px] w-1 items-center bg-[#5f6b78]">
            <svg width="4" height="6" viewBox="0 0 4 6" aria-hidden="true">
              <path d="M4 0v6L1 3z" fill="#d5d9dd" />
            </svg>
          </button>
        </div>
        <Canvas />
      </div>
    </div>
  );
}
